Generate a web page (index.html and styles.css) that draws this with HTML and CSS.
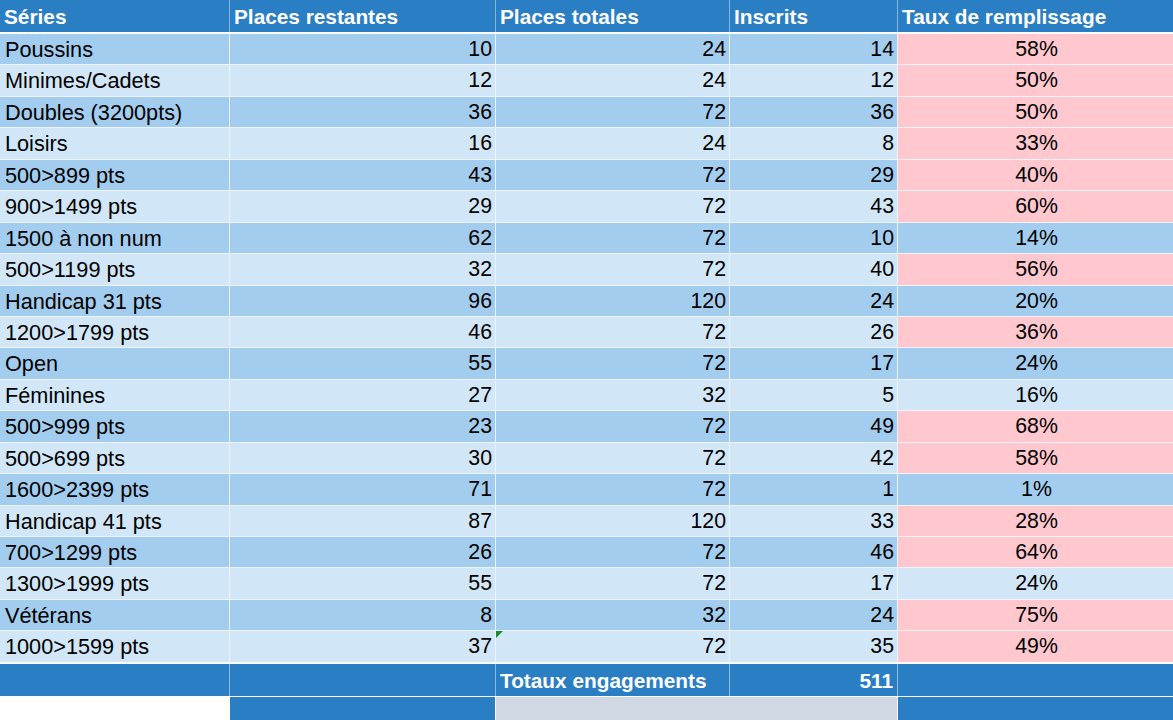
FILE: index.html
```html
<!DOCTYPE html>
<html lang="fr">
<head>
<meta charset="utf-8">
<title>Séries</title>
<link rel="stylesheet" href="styles.css">
</head>
<body>
<div class="sheet">
  <div class="row head">
    <div class="c">Séries</div>
    <div class="c">Places restantes</div>
    <div class="c">Places totales</div>
    <div class="c">Inscrits</div>
    <div class="c">Taux de remplissage</div>
  </div>
  <div class="body">
    <div class="row dark"><div class="c">Poussins</div><div class="c n">10</div><div class="c n">24</div><div class="c n">14</div><div class="c p hi">58%</div></div>
    <div class="row light"><div class="c">Minimes/Cadets</div><div class="c n">12</div><div class="c n">24</div><div class="c n">12</div><div class="c p hi">50%</div></div>
    <div class="row dark"><div class="c">Doubles (3200pts)</div><div class="c n">36</div><div class="c n">72</div><div class="c n">36</div><div class="c p hi">50%</div></div>
    <div class="row light"><div class="c">Loisirs</div><div class="c n">16</div><div class="c n">24</div><div class="c n">8</div><div class="c p hi">33%</div></div>
    <div class="row dark"><div class="c">500&gt;899 pts</div><div class="c n">43</div><div class="c n">72</div><div class="c n">29</div><div class="c p hi">40%</div></div>
    <div class="row light"><div class="c">900&gt;1499 pts</div><div class="c n">29</div><div class="c n">72</div><div class="c n">43</div><div class="c p hi">60%</div></div>
    <div class="row dark"><div class="c">1500 à non num</div><div class="c n">62</div><div class="c n">72</div><div class="c n">10</div><div class="c p">14%</div></div>
    <div class="row light"><div class="c">500&gt;1199 pts</div><div class="c n">32</div><div class="c n">72</div><div class="c n">40</div><div class="c p hi">56%</div></div>
    <div class="row dark"><div class="c">Handicap 31 pts</div><div class="c n">96</div><div class="c n">120</div><div class="c n">24</div><div class="c p">20%</div></div>
    <div class="row light"><div class="c">1200&gt;1799 pts</div><div class="c n">46</div><div class="c n">72</div><div class="c n">26</div><div class="c p hi">36%</div></div>
    <div class="row dark"><div class="c">Open</div><div class="c n">55</div><div class="c n">72</div><div class="c n">17</div><div class="c p">24%</div></div>
    <div class="row light"><div class="c">Féminines</div><div class="c n">27</div><div class="c n">32</div><div class="c n">5</div><div class="c p">16%</div></div>
    <div class="row dark"><div class="c">500&gt;999 pts</div><div class="c n">23</div><div class="c n">72</div><div class="c n">49</div><div class="c p hi">68%</div></div>
    <div class="row light"><div class="c">500&gt;699 pts</div><div class="c n">30</div><div class="c n">72</div><div class="c n">42</div><div class="c p hi">58%</div></div>
    <div class="row dark"><div class="c">1600&gt;2399 pts</div><div class="c n">71</div><div class="c n">72</div><div class="c n">1</div><div class="c p">1%</div></div>
    <div class="row light"><div class="c">Handicap 41 pts</div><div class="c n">87</div><div class="c n">120</div><div class="c n">33</div><div class="c p hi">28%</div></div>
    <div class="row dark"><div class="c">700&gt;1299 pts</div><div class="c n">26</div><div class="c n">72</div><div class="c n">46</div><div class="c p hi">64%</div></div>
    <div class="row light"><div class="c">1300&gt;1999 pts</div><div class="c n">55</div><div class="c n">72</div><div class="c n">17</div><div class="c p">24%</div></div>
    <div class="row dark"><div class="c">Vétérans</div><div class="c n">8</div><div class="c n">32</div><div class="c n">24</div><div class="c p hi">75%</div></div>
    <div class="row light"><div class="c">1000&gt;1599 pts</div><div class="c n">37</div><div class="c n flag">72</div><div class="c n">35</div><div class="c p hi">49%</div></div>
  </div>
  <div class="row total">
    <div class="c"></div>
    <div class="c"></div>
    <div class="c">Totaux engagements</div>
    <div class="c n">511</div>
    <div class="c"></div>
  </div>
  <div class="row foot">
    <div class="c blank"></div>
    <div class="c blue"></div>
    <div class="c grey"></div>
    <div class="c blue"></div>
  </div>
</div>
</body>
</html>
```

FILE: styles.css
```css
html, body {
  margin: 0;
  padding: 0;
  background: #ffffff;
}

body {
  font-family: "Liberation Sans", Arial, sans-serif;
  color: #000000;
  overflow: hidden;
}

.sheet {
  width: 1173px;
  height: 720px;
  display: flex;
  flex-direction: column;
  background: #ffffff;
}

.row {
  display: grid;
  grid-template-columns: 229px 265px 233px 167px 275px;
  column-gap: 1px;
}

.c {
  position: relative;
  padding: 0 3px 0 5px;
  white-space: nowrap;
  overflow: hidden;
}

/* header */
.head {
  height: 32px;
  background: #83b6e2;
  margin-bottom: 2px;
}

.head .c {
  background: #2a7ec4;
  color: #ffffff;
  font-weight: bold;
  font-size: 20.8px;
  line-height: 33px;
  padding-left: 4px;
}

/* body rows */
.body {
  display: flex;
  flex-direction: column;
  row-gap: 1px;
  background: #eef4fa;
}

.body .row {
  height: 30.45px;
  background: #eef4fa;
}

.body .c {
  font-size: 21.7px;
  line-height: 31px;
}

.body .c.n,
.body .c.p {
  font-size: 21.3px;
}

.dark .c {
  background: #a3cdee;
}

.light .c {
  background: #d1e6f6;
}

.body .c.hi {
  background: #ffc7ce;
}

.n {
  text-align: right;
}

.p {
  text-align: center;
}

.flag::before {
  content: "";
  position: absolute;
  left: 0;
  top: 0;
  border-top: 7px solid #1e8a2a;
  border-right: 7px solid transparent;
}

/* totals */
.total {
  height: 32px;
  margin-top: 2px;
  background: #8bbbe3;
}

.total .c {
  background: #2a7ec4;
  color: #ffffff;
  font-weight: bold;
  font-size: 20.8px;
  line-height: 34px;
  padding-left: 4px;
}

.total .n {
  padding-right: 4px;
}

/* footer strip */
.foot {
  flex: 1;
  margin-top: 1px;
  grid-template-columns: 229px 265px 401px 275px;
  column-gap: 1px;
  background: #ffffff;
}

.foot .blank {
  background: #ffffff;
}

.foot .blue {
  background: #2a7ec4;
}

.foot .grey {
  background: #d0d9e3;
}
```
